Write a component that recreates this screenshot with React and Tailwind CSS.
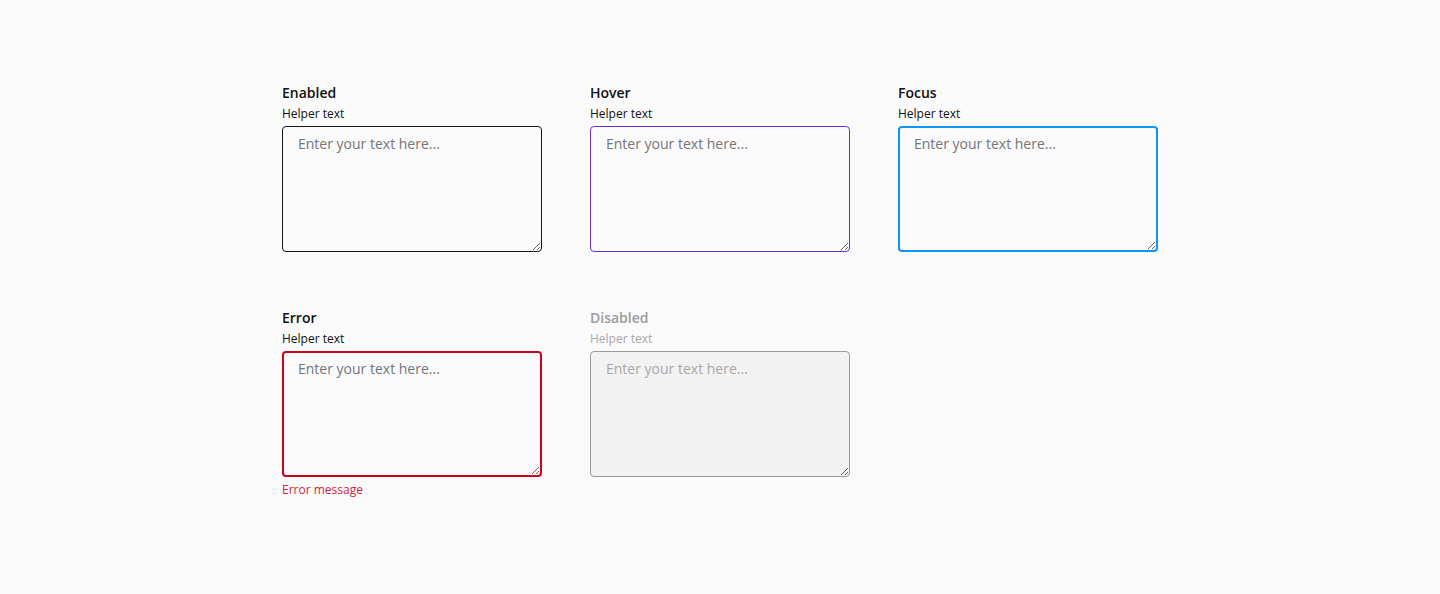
import React from 'react';

const font = { fontFamily: '"Open Sans", sans-serif' };

const Field = ({ label, state = 'enabled', error }) => {
  const disabled = state === 'disabled';

  const boxClass = {
    enabled: 'bg-[#fafafa] border border-[#161616] px-[15px] pt-[7px]',
    hover: 'bg-[#fafafa] border border-[#6f2dc4] px-[15px] pt-[7px]',
    focus: 'bg-[#fafafa] border-2 border-[#0f95f4] px-[14px] pt-[6px]',
    error: 'bg-[#fafafa] border-2 border-[#d0021b] px-[14px] pt-[6px]',
    disabled: 'bg-[#f2f2f2] border border-[#9a9a9a] px-[15px] pt-[7px] placeholder:text-[#a8a8a8]'
  }[state];

  return (
    <div className="flex w-[260px] flex-col">
      {/* Label + helper */}
      <span className={`text-[14px] font-semibold leading-5 ${disabled ? 'text-[#9b9b9b]' : 'text-[#111111]'}`}>
        {label}
      </span>
      <span className={`mt-[3px] text-[12px] leading-4 ${disabled ? 'text-[#a8a8a8]' : 'text-[#111111]'}`}>
        Helper text
      </span>
      <textarea
        disabled={disabled}
        placeholder="Enter your text here..."
        style={font}
        className={`mt-[4px] h-[126px] w-[260px] rounded-[4px] text-[14px] leading-5 text-[#161616] outline-none placeholder:text-[#757575] ${boxClass}`}
      />
      {error && (
        <span className="mt-[5px] text-[12px] leading-4 text-[#d8213a]">{error}</span>
      )}
    </div>
  );
};

export default function App() {
  return (
    <div className="min-h-[594px] w-full bg-[#fafafa]" style={font}>
      <div className="ml-[282px] flex flex-col gap-[56px] pt-[83px]">
        <div className="flex gap-[48px]">
          <Field label="Enabled" state="enabled" />
          <Field label="Hover" state="hover" />
          <Field label="Focus" state="focus" />
        </div>
        <div className="flex items-start gap-[48px]">
          <Field label="Error" state="error" error="Error message" />
          <Field label="Disabled" state="disabled" />
        </div>
      </div>
    </div>
  );
}
